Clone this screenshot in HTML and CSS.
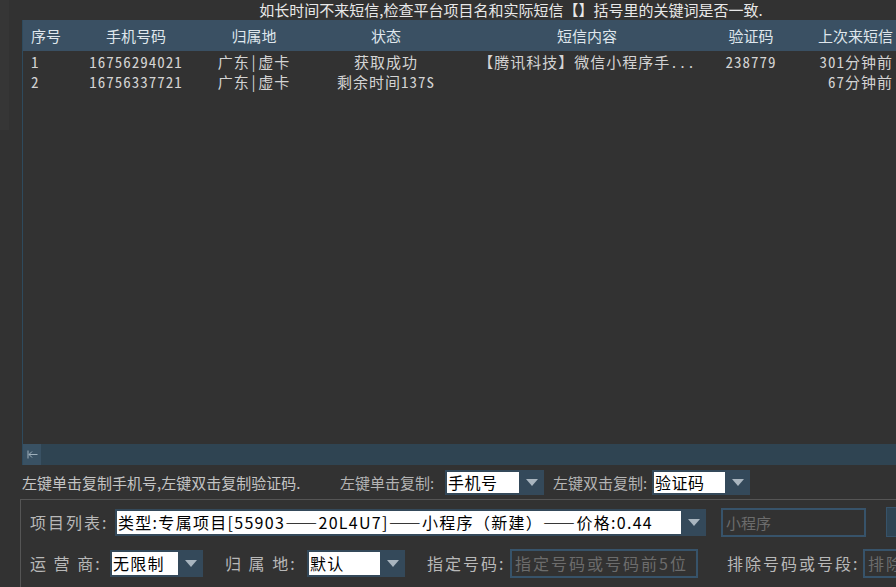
FILE: index.html
```html
<!DOCTYPE html>
<html lang="zh-CN">

<head>
    <meta charset="UTF-8">
    <meta name="viewport" content="width=device-width, initial-scale=1.0">
    <title>接码</title>
    <link rel="stylesheet" href="styles.css">
</head>

<body>
    <div class="app">
        <div class="top">
            <div class="notice">如长时间不来短信,检查平台项目名和实际短信【】括号里的关键词是否一致.</div>

            <!-- 号码列表 -->
            <div class="grid">
                <div class="grid-head cols">
                    <div class="c-left">序号</div>
                    <div>手机号码</div>
                    <div>归属地</div>
                    <div>状态</div>
                    <div>短信内容</div>
                    <div>验证码</div>
                    <div class="c-right">上次来短信</div>
                </div>
                <div class="grid-body">
                    <div class="grid-row cols">
                        <div class="c-left">1</div>
                        <div>16756294021</div>
                        <div>广东|虚卡</div>
                        <div>获取成功</div>
                        <div>【腾讯科技】微信小程序手...</div>
                        <div>238779</div>
                        <div class="c-right">301分钟前</div>
                    </div>
                    <div class="grid-row cols">
                        <div class="c-left">2</div>
                        <div>16756337721</div>
                        <div>广东|虚卡</div>
                        <div>剩余时间137S</div>
                        <div></div>
                        <div></div>
                        <div class="c-right">67分钟前</div>
                    </div>
                </div>
                <div class="hscroll">
                    <div class="hscroll-btn">
                        <svg width="11" height="9" viewBox="0 0 11 9">
                            <path d="M1 0.5V8.5M2 4.5H10.5M2 4.5L5 1.5M2 4.5L5 7.5" stroke="#9fb0bc" stroke-width="1" fill="none" />
                        </svg>
                    </div>
                </div>
            </div>
        </div>

        <!-- 复制设置 -->
        <div class="copybar">
            <span class="hint">左键单击复制手机号,左键双击复制验证码.</span>
            <span class="lbl copy-lbl">左键单击复制:</span>
            <div class="combo">
                <div class="combo-field w-copy">手机号</div>
                <div class="combo-arrow"></div>
            </div>
            <span class="lbl copy-lbl2">左键双击复制:</span>
            <div class="combo">
                <div class="combo-field w-copy2">验证码</div>
                <div class="combo-arrow"></div>
            </div>
        </div>

        <!-- 项目选择 -->
        <div class="group">
            <div class="group-row">
                <span class="big-lbl w-proj">项目列表:</span>
                <div class="combo combo-big">
                    <div class="combo-field w-proj-field">类型:专属项目[55903——20L4U7]——小程序（新建）——价格:0.44</div>
                    <div class="combo-arrow"></div>
                </div>
                <input class="textbox w-search" placeholder="小程序">
                <div class="side-btn"></div>
            </div>
            <div class="group-row row-b">
                <span class="big-lbl w-isp">运 营 商:</span>
                <div class="combo combo-big">
                    <div class="combo-field w-isp-field">无限制</div>
                    <div class="combo-arrow"></div>
                </div>
                <span class="big-lbl w-area">归 属 地:</span>
                <div class="combo combo-big">
                    <div class="combo-field w-area-field">默认</div>
                    <div class="combo-arrow"></div>
                </div>
                <span class="big-lbl w-num">指定号码:</span>
                <input class="textbox wide-text w-num-field" placeholder="指定号码或号码前5位">
                <span class="big-lbl w-excl">排除号码或号段:</span>
                <input class="textbox wide-text w-excl-field" placeholder="排除号码或号段">
            </div>
        </div>
    </div>
</body>

</html>
```

FILE: styles.css
```css
body {
    margin: 0;
    width: 896px;
    height: 587px;
    overflow: hidden;
    background: linear-gradient(#363636, #363636) no-repeat 0 0 / 9px 130px, #323232;
    font-family: "Noto Sans CJK SC", "Noto Sans", sans-serif;
    color: #d6d6d6;
}

.app {
    display: flex;
    flex-direction: column;
    height: 587px;
}

.top {
    margin-left: 22px;
    width: 978px;
}

.notice {
    height: 20px;
    line-height: 19px;
    font-size: 15px;
    text-align: center;
    color: #e8e8e8;
    white-space: nowrap;
}

.grid {
    height: 445px;
    display: flex;
    flex-direction: column;
    border-left: 1px solid #2e4a5d;
}

.cols {
    display: grid;
    grid-template-columns: 53px 120px 116px 148px 254px 74px 110px;
    align-items: center;
    text-align: center;
    white-space: nowrap;
}

.c-left {
    text-align: left;
    padding-left: 8px;
}

.c-right {
    text-align: right;
    padding-right: 5px;
}

.grid-head {
    height: 31px;
    background: #3a5063;
    font-size: 15px;
    color: #dfe6ec;
}

.grid-body {
    flex: 1;
    padding-top: 1px;
}

.grid-row {
    height: 20px;
    line-height: 20px;
    font-size: 15px;
    letter-spacing: 1px;
    font-feature-settings: "hwid";
    color: #d4d4d4;
}

.hscroll {
    height: 21px;
    background: #2f4452;
    display: flex;
}

.hscroll-btn {
    width: 18px;
    background: #395163;
    display: flex;
    align-items: center;
    justify-content: center;
}

.copybar {
    height: 34px;
    display: flex;
    align-items: center;
    padding-left: 22px;
    font-size: 15px;
    color: #c4c4c4;
    white-space: nowrap;
}

.copybar > *,
.group-row > * {
    flex-shrink: 0;
}

.hint {
    width: 318px;
}

.lbl {
    color: #b4b4b4;
}

.copy-lbl {
    width: 105px;
}

.copy-lbl2 {
    width: 99px;
    margin-left: 9px;
}

.combo {
    display: flex;
    height: 25px;
    padding: 2px 0 2px 2px;
    box-sizing: border-box;
    background: #34495a;
}

.combo-field {
    background: #fff;
    color: #000;
    font-size: 16px;
    line-height: 21px;
    padding-left: 1px;
    letter-spacing: 0.5px;
    white-space: nowrap;
}

.combo-arrow {
    width: 25px;
    display: flex;
    align-items: center;
    justify-content: center;
}

.combo-arrow::after {
    content: "";
    border-left: 6px solid transparent;
    border-right: 6px solid transparent;
    border-top: 7px solid #a9b5bf;
}

.w-copy {
    width: 71px;
}

.w-copy2 {
    width: 70px;
}

.group {
    flex: 1;
    margin-left: 20px;
    border-top: 1px solid #555;
    border-left: 1px solid #555;
    padding: 8px 0 0 9px;
}

.group-row {
    display: flex;
    align-items: center;
    height: 28px;
    white-space: nowrap;
}

.row-b {
    margin-top: 13px;
}

.big-lbl {
    font-size: 16px;
    letter-spacing: 2px;
    color: #b8b8b8;
}

.combo-big {
    height: 27px;
}

.combo-big .combo-field {
    line-height: 23px;
    letter-spacing: 1.3px;
}

.w-proj {
    width: 85px;
}

.w-proj-field {
    width: 563px;
    overflow: hidden;
}

.textbox {
    height: 29px;
    box-sizing: border-box;
    border: 2px solid #37536a;
    background: transparent;
    padding: 0 0 0 3px;
    margin: 0;
    font-family: "Noto Sans CJK SC", sans-serif;
    font-size: 15px;
    color: #ccc;
    outline: none;
}

.textbox::placeholder {
    color: #6c6c6c;
}

.wide-text {
    font-size: 16px;
    letter-spacing: 2px;
}

.w-search {
    width: 145px;
    margin-left: 15px;
}

.side-btn {
    width: 60px;
    height: 30px;
    box-sizing: border-box;
    margin-left: 20px;
    border: 1px solid #37536a;
    background: #2f4453;
}

.w-isp {
    width: 80px;
}

.w-isp-field {
    width: 65px;
}

.w-area {
    width: 82px;
    margin-left: 22px;
}

.w-area-field {
    width: 70px;
}

.w-num {
    width: 83px;
    margin-left: 22px;
}

.w-num-field {
    width: 188px;
}

.w-excl {
    width: 136px;
    margin-left: 29px;
}

.w-excl-field {
    width: 100px;
}
```
